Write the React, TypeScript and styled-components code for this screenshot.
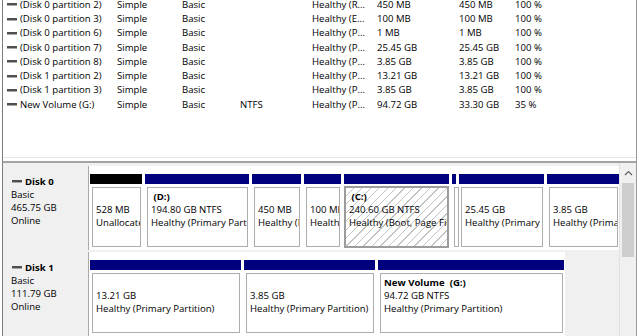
import React from 'react';
import styled, { createGlobalStyle } from 'styled-components';

const GlobalStyle = createGlobalStyle`
  html, body { margin: 0; padding: 0; background: #ffffff; }
  body {
    font-family: "Open Sans", "Noto Sans", "Liberation Sans", sans-serif;
    font-size: 9.6px;
    color: #000000;
  }
`;

const Window = styled.div`
  width: 640px;
  height: 336px;
  overflow: hidden;
  display: flex;
  flex-direction: column;
  background: #ffffff;
`;

const ListPane = styled.div`
  height: 161px;
  margin: 0 3px 0 2px;
  border-left: 1px solid #7c7c7c;
  border-right: 1px solid #9a9a9a;
  background: #ffffff;
  overflow: hidden;
  display: flex;
  flex-direction: column;
`;

const ListRows = styled.div`
  margin-top: -2.4px;
  flex: 1;
`;

const ListFooter = styled.div`
  height: 3px;
  border-top: 1px solid #e6e6e6;
`;

const ListRow = styled.div`
  height: 14.27px;
  display: grid;
  grid-template-columns: 17px 97px 65px 58px 72px 65px 82px 56px 1fr;
  align-items: center;
  white-space: nowrap;
  line-height: 14px;
`;

const IconCell = styled.div`
  padding-left: 4px;
  display: flex;
  align-items: center;
`;

const Cell = styled.div`
  overflow: hidden;
`;

const GraphPane = styled.div`
  flex: 1;
  display: flex;
  margin: 0 3px 0 2px;
  border-left: 1px solid #7c7c7c;
  border-right: 1px solid #9a9a9a;
  border-top: 2px solid #a3a3a3;
  background: #f0f0f0;
  min-height: 0;
`;

const DiskStack = styled.div`
  flex: 1;
  display: flex;
  flex-direction: column;
  gap: 2px;
  padding-top: 3px;
  min-width: 0;
`;

const DiskRow = styled.div`
  height: 84px;
  flex-shrink: 0;
  display: flex;
`;

const DiskLabel = styled.div`
  width: 86px;
  flex-shrink: 0;
  background: #f0f0f0;
  border-right: 1px solid #a9a9a9;
  padding: 8.5px 0 0 8px;
  box-sizing: border-box;
  line-height: 13px;
`;

const DiskTitle = styled.div`
  display: flex;
  align-items: center;
  gap: 3px;
  padding-left: 1px;
  font-weight: 700;
`;

const PartitionArea = styled.div`
  flex: 1;
  display: flex;
  align-items: stretch;
`;

const Strip = styled.div`
  display: flex;
  gap: 3px;
  background: #ffffff;
  padding: 7.5px 1px 0 1px;
`;

const Partition = styled.div<{ $w: number }>`
  width: ${p => p.$w}px;
  flex-shrink: 0;
  display: flex;
  flex-direction: column;
`;

const Bar = styled.div<{ $color: string }>`
  height: 10px;
  background: ${p => p.$color};
`;

const Body = styled.div<{ $selected?: boolean }>`
  margin: ${p => (p.$selected ? '2px 0 0 0' : '3px 1px 0 2px')};
  height: ${p => (p.$selected ? '62px' : '60px')};
  box-sizing: border-box;
  border: ${p => (p.$selected ? '2px solid #9c9c9c' : '1px solid #adadad')};
  padding: ${p => (p.$selected ? '2px 0 0 3px' : '2px 0 0 3px')};
  line-height: 13px;
  white-space: pre;
  overflow: hidden;
  background: ${p =>
    p.$selected
      ? 'repeating-linear-gradient(135deg, #ffffff 0px, #ffffff 5px, #c4c4c4 5px, #c4c4c4 6px)'
      : '#ffffff'};
`;

const BodyTitle = styled.div`
  font-weight: 700;
  height: 13px;
`;

const Line = styled.div``;

const Scrollbar = styled.div`
  width: 16px;
  flex-shrink: 0;
  background: #f0f0f0;
  border-left: 1px solid #e2e2e2;
  display: flex;
  flex-direction: column;
  align-items: center;
`;

const ArrowBox = styled.div`
  height: 17px;
  display: flex;
  align-items: center;
  justify-content: center;
  margin-top: 1px;
`;

const Thumb = styled.div`
  width: 12px;
  height: 74px;
  margin-top: 2px;
  background: #cdcdcd;
`;

const DiskIcon = () => (
  <svg width="10" height="5" viewBox="0 0 10 5">
    <rect x="0" y="1" width="10" height="2" fill="#4f4f4f" />
    <rect x="0" y="3" width="10" height="1" fill="#a8a8a8" />
  </svg>
);

const UpArrow = () => (
  <svg width="9" height="6" viewBox="0 0 9 6">
    <path d="M1 5 L4.5 1.5 L8 5" fill="none" stroke="#606060" strokeWidth="1.2" />
  </svg>
);

type Vol = [string, string, string, string, string, string, string, string];

const volumes: Vol[] = [
  ['(Disk 0 partition 2)', 'Simple', 'Basic', '', 'Healthy (R...', '450 MB', '450 MB', '100 %'],
  ['(Disk 0 partition 3)', 'Simple', 'Basic', '', 'Healthy (E...', '100 MB', '100 MB', '100 %'],
  ['(Disk 0 partition 6)', 'Simple', 'Basic', '', 'Healthy (P...', '1 MB', '1 MB', '100 %'],
  ['(Disk 0 partition 7)', 'Simple', 'Basic', '', 'Healthy (P...', '25.45 GB', '25.45 GB', '100 %'],
  ['(Disk 0 partition 8)', 'Simple', 'Basic', '', 'Healthy (P...', '3.85 GB', '3.85 GB', '100 %'],
  ['(Disk 1 partition 2)', 'Simple', 'Basic', '', 'Healthy (P...', '13.21 GB', '13.21 GB', '100 %'],
  ['(Disk 1 partition 3)', 'Simple', 'Basic', '', 'Healthy (P...', '3.85 GB', '3.85 GB', '100 %'],
  ['New Volume (G:)', 'Simple', 'Basic', 'NTFS', 'Healthy (P...', '94.72 GB', '33.30 GB', '35 %'],
];

type Part = { w: number; color?: string; selected?: boolean; title: string; size: string; status: string };

const NAVY = '#00007f';

const disks: { name: string; type: string; size: string; state: string; parts: Part[] }[] = [
  {
    name: 'Disk 0',
    type: 'Basic',
    size: '465.75 GB',
    state: 'Online',
    parts: [
      { w: 52, color: '#000000', title: '', size: '528 MB', status: 'Unallocated' },
      { w: 104, title: ' (D:)', size: '194.80 GB NTFS', status: 'Healthy (Primary Partition)' },
      { w: 49, title: '', size: '450 MB', status: 'Healthy (Recovery Partition)' },
      { w: 37, title: '', size: '100 MB', status: 'Healthy (EFI System Partition)' },
      { w: 105, selected: true, title: ' (C:)', size: '240.60 GB NTFS', status: 'Healthy (Boot, Page File, Crash Dump, Primary Partition)' },
      { w: 4, title: '', size: '', status: '' },
      { w: 85, title: '', size: '25.45 GB', status: 'Healthy (Primary Partition)' },
      { w: 72, title: '', size: '3.85 GB', status: 'Healthy (Primary Partition)' },
    ],
  },
  {
    name: 'Disk 1',
    type: 'Basic',
    size: '111.79 GB',
    state: 'Online',
    parts: [
      { w: 151, title: '', size: '13.21 GB', status: 'Healthy (Primary Partition)' },
      { w: 131, title: '', size: '3.85 GB', status: 'Healthy (Primary Partition)' },
      { w: 186, title: 'New Volume  (G:)', size: '94.72 GB NTFS', status: 'Healthy (Primary Partition)' },
    ],
  },
];

export default function App() {
  return (
    <>
      <GlobalStyle />
      <Window>
        <ListPane>
          <ListRows>
            {volumes.map((v, i) => (
              <ListRow key={i}>
                <IconCell>
                  <DiskIcon />
                </IconCell>
                {v.map((c, j) => (
                  <Cell key={j}>{c}</Cell>
                ))}
              </ListRow>
            ))}
          </ListRows>
          <ListFooter />
        </ListPane>
        <GraphPane>
          <DiskStack>
            {disks.map(d => (
              <DiskRow key={d.name}>
                <DiskLabel>
                  <DiskTitle>
                    <DiskIcon />
                    {d.name}
                  </DiskTitle>
                  <Line>{d.type}</Line>
                  <Line>{d.size}</Line>
                  <Line>{d.state}</Line>
                </DiskLabel>
                <PartitionArea>
                  <Strip>
                    {d.parts.map((p, i) => (
                      <Partition key={i} $w={p.w}>
                        <Bar $color={p.color ?? NAVY} />
                        <Body $selected={p.selected}>
                          <BodyTitle>{p.title}</BodyTitle>
                          {p.size && <Line>{p.size}</Line>}
                          {p.status && <Line>{p.status}</Line>}
                        </Body>
                      </Partition>
                    ))}
                  </Strip>
                </PartitionArea>
              </DiskRow>
            ))}
          </DiskStack>
          <Scrollbar>
            <ArrowBox>
              <UpArrow />
            </ArrowBox>
            <Thumb />
          </Scrollbar>
        </GraphPane>
      </Window>
    </>
  );
}
